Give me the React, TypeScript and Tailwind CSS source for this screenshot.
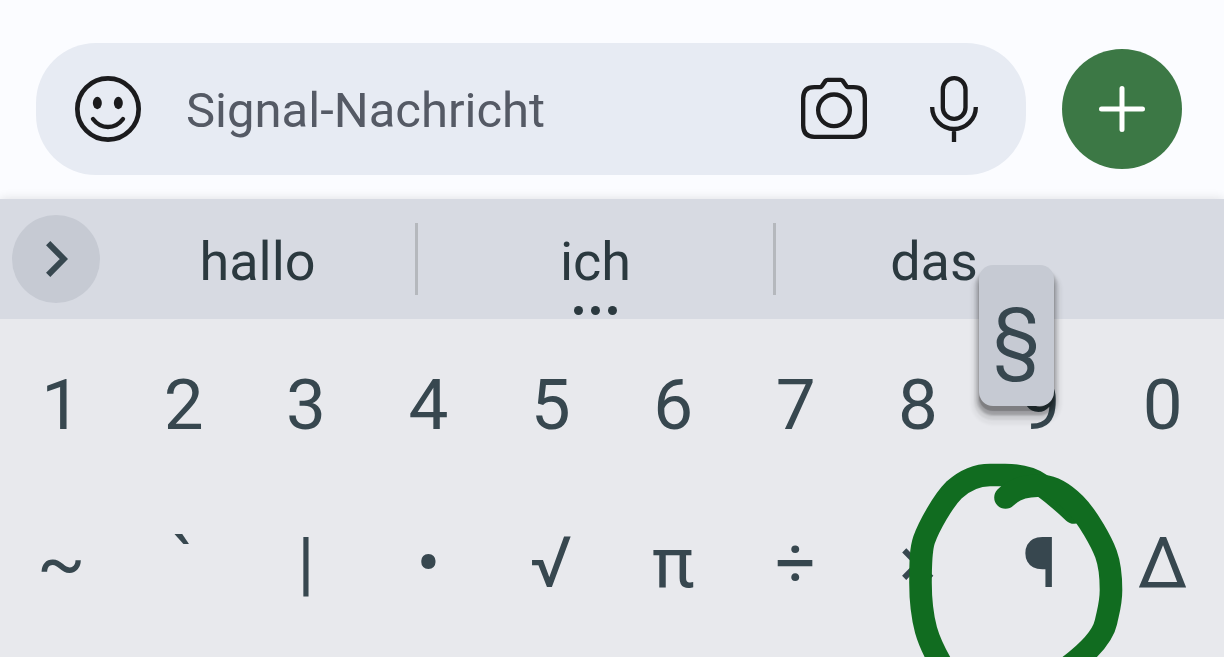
import React from "react";

type IconProps = { className?: string };

function SmileIcon({ className }: IconProps) {
  return (
    <svg className={className} viewBox="165 138 198 198" fill="none" aria-hidden="true">
      <circle cx="264" cy="237" r="92" stroke="currentColor" strokeWidth="14" />
      <ellipse cx="232" cy="219" rx="13.5" ry="18.5" fill="currentColor" />
      <ellipse cx="295" cy="219" rx="13.5" ry="18.5" fill="currentColor" />
      <path d="M219 267C231 283 246 291 264 291C282 291 297 283 309 267" stroke="currentColor" strokeWidth="13" strokeLinecap="round" />
    </svg>
  );
}

function CameraIcon({ className }: IconProps) {
  return (
    <svg className={className} viewBox="63 138 198 198" fill="none" stroke="currentColor" strokeWidth="13" aria-hidden="true">
      <path d="M103 171.500H122Q124 171 126 168L137 152Q139 149.500 143 149.500H182Q186 149.500 188 152L199 168Q201 171 204 171.500H221Q254.500 171.500 254.500 205V286Q254.500 320.500 221 320.500H103Q69.500 320.500 69.500 286V205Q69.500 171.500 103 171.500Z" />
      <circle cx="162" cy="241" r="47.500" />
    </svg>
  );
}

function MicIcon({ className }: IconProps) {
  return (
    <svg className={className} viewBox="450 138 144 198" fill="none" stroke="currentColor" strokeWidth="13" aria-hidden="true">
      <rect x="488.500" y="144.500" width="68" height="122" rx="34" />
      <path d="M456.500 231a65.500 66 0 0 0 131 0M522 297V336" />
    </svg>
  );
}

function PlusIcon({ className }: IconProps) {
  return (
    <svg className={className} viewBox="0 0 46 46" fill="none" stroke="currentColor" strokeWidth="5" strokeLinecap="round" aria-hidden="true">
      <path d="M23 2.500V43.500M2.500 23H43.500" />
    </svg>
  );
}

function ChevronIcon({ className }: IconProps) {
  return (
    <svg className={className} viewBox="0 0 66 108" fill="none" stroke="currentColor" strokeWidth="18" aria-hidden="true">
      <path d="M6.500 6.500L53.500 54L6.500 101.500" />
    </svg>
  );
}

function PenCircle() {
  return (
    <svg
      className="pointer-events-none absolute -left-[72px] -top-[20px] z-20 h-[194px] w-[216px]"
      viewBox="907 463 216 194"
      fill="none"
      stroke="#116c20"
      strokeWidth="22.600"
      strokeLinecap="round"
      strokeLinejoin="round"
      aria-hidden="true"
    >
      <path d="M1074 512.500C1062 501 1052 493 1040 484C1030 477 1018 475 1005 475H990C976 475 964 481 954 490C943 501 929 526 924 540C921 549 920.500 560 920.500 583C920.500 600 922 615 926 630C930 644 936 656 946 672" />
      <path d="M1005.500 497.500C1015 488 1029 485 1043 486C1054 487 1065 494 1075 504C1088 517 1102 543 1106 554C1110 565 1111 576 1111 590C1111 604 1108 612 1106 622C1103 636 1088 652 1068 667" />
    </svg>
  );
}

function KeyPopup({ char }: { char: string }) {
  return (
    <span className="absolute -top-[60px] left-0 z-10 flex h-[141px] w-[75px] items-center justify-center rounded-[14px] bg-[#c6cad3] pt-1 text-[77px] leading-none shadow-[0_5px_1px_rgba(0,0,0,0.2),0_8px_2px_1px_rgba(0,0,0,0.14),0_7px_2px_3px_rgba(0,0,0,0.1),0_9px_2px_5px_rgba(0,0,0,0.07),0_11px_3px_8px_rgba(0,0,0,0.04)]">
      {char}
    </span>
  );
}

const rows = [
  ["1", "2", "3", "4", "5", "6", "7", "8", "9", "0"],
  ["~", "`", "|", "•", "√", "π", "÷", "×", "¶", "Δ"],
];

const wordClass = "relative flex h-full min-w-0 items-center justify-center pt-[6px]";

export default function App() {
  return (
    <div className="flex min-h-screen flex-col overflow-hidden bg-[#fbfcff] font-['Roboto','Noto_Sans',sans-serif]">
      <form
        className="flex items-center gap-9 pb-6 pl-9 pr-[42px] pt-[43px]"
        onSubmit={(e: React.FormEvent) => e.preventDefault()}
      >
        <div className="flex h-[132px] min-w-0 flex-1 items-center rounded-[60px] bg-[#e7ebf3] pl-[39px] pr-12 text-[#1b1b1d]">
          <button type="button" aria-label="Emoji" className="shrink-0">
            <SmileIcon className="size-[66px]" />
          </button>
          <input
            type="text"
            aria-label="Signal-Nachricht"
            placeholder="Signal-Nachricht"
            className="ml-[45px] min-w-0 flex-1 bg-transparent pt-[3px] text-[49px] leading-[64px] outline-none placeholder:text-[#555a65] placeholder:opacity-100"
          />
          <button type="button" aria-label="Kamera" className="shrink-0">
            <CameraIcon className="size-[66px]" />
          </button>
          <button type="button" aria-label="Sprachnachricht" className="ml-[63px] shrink-0">
            <MicIcon className="h-[66px] w-12" />
          </button>
        </div>
        <button
          type="button"
          aria-label="Anhang"
          className="flex size-[120px] shrink-0 items-center justify-center rounded-full bg-[#3c7845] text-white"
        >
          <PlusIcon className="size-[46px]" />
        </button>
      </form>

      <section className="flex flex-1 flex-col bg-[#e8e9ed] text-[#37474f] shadow-[0_0_10px_rgba(0,0,0,0.12)]">
        <div className="flex h-[120px] items-center bg-[#d7dae2] pl-3 pr-[132px] text-[54px] leading-none text-[#2b393f]">
          <button
            type="button"
            aria-label="Mehr anzeigen"
            className="flex size-[88px] shrink-0 items-center justify-center rounded-full bg-[#c6cad3] text-[#37474f]"
          >
            <ChevronIcon className="ml-[2px] h-9 w-[22px]" />
          </button>
          <button type="button" className={`${wordClass} flex-[315]`}>hallo</button>
          <span className="h-[72px] w-[3px] bg-[#b5b8bd]" />
          <button type="button" className={`${wordClass} flex-[355]`}>
            ich
            <span className="absolute bottom-1 flex gap-2">
              <span className="size-[9px] rounded-full bg-current" />
              <span className="size-[9px] rounded-full bg-current" />
              <span className="size-[9px] rounded-full bg-current" />
            </span>
          </button>
          <span className="h-[72px] w-[3px] bg-[#b5b8bd]" />
          <button type="button" className={`${wordClass} flex-[316]`}>das</button>
        </div>

        <div className="grid grid-cols-10 pb-4 pt-[6px] text-[71px] leading-none">
          {rows.flat().map((key) => (
            <button key={key} type="button" className="relative flex h-[158px] items-center justify-center">
              {key}
              {key === "9" && <KeyPopup char="§" />}
              {key === "¶" && <PenCircle />}
            </button>
          ))}
        </div>
      </section>
    </div>
  );
}
